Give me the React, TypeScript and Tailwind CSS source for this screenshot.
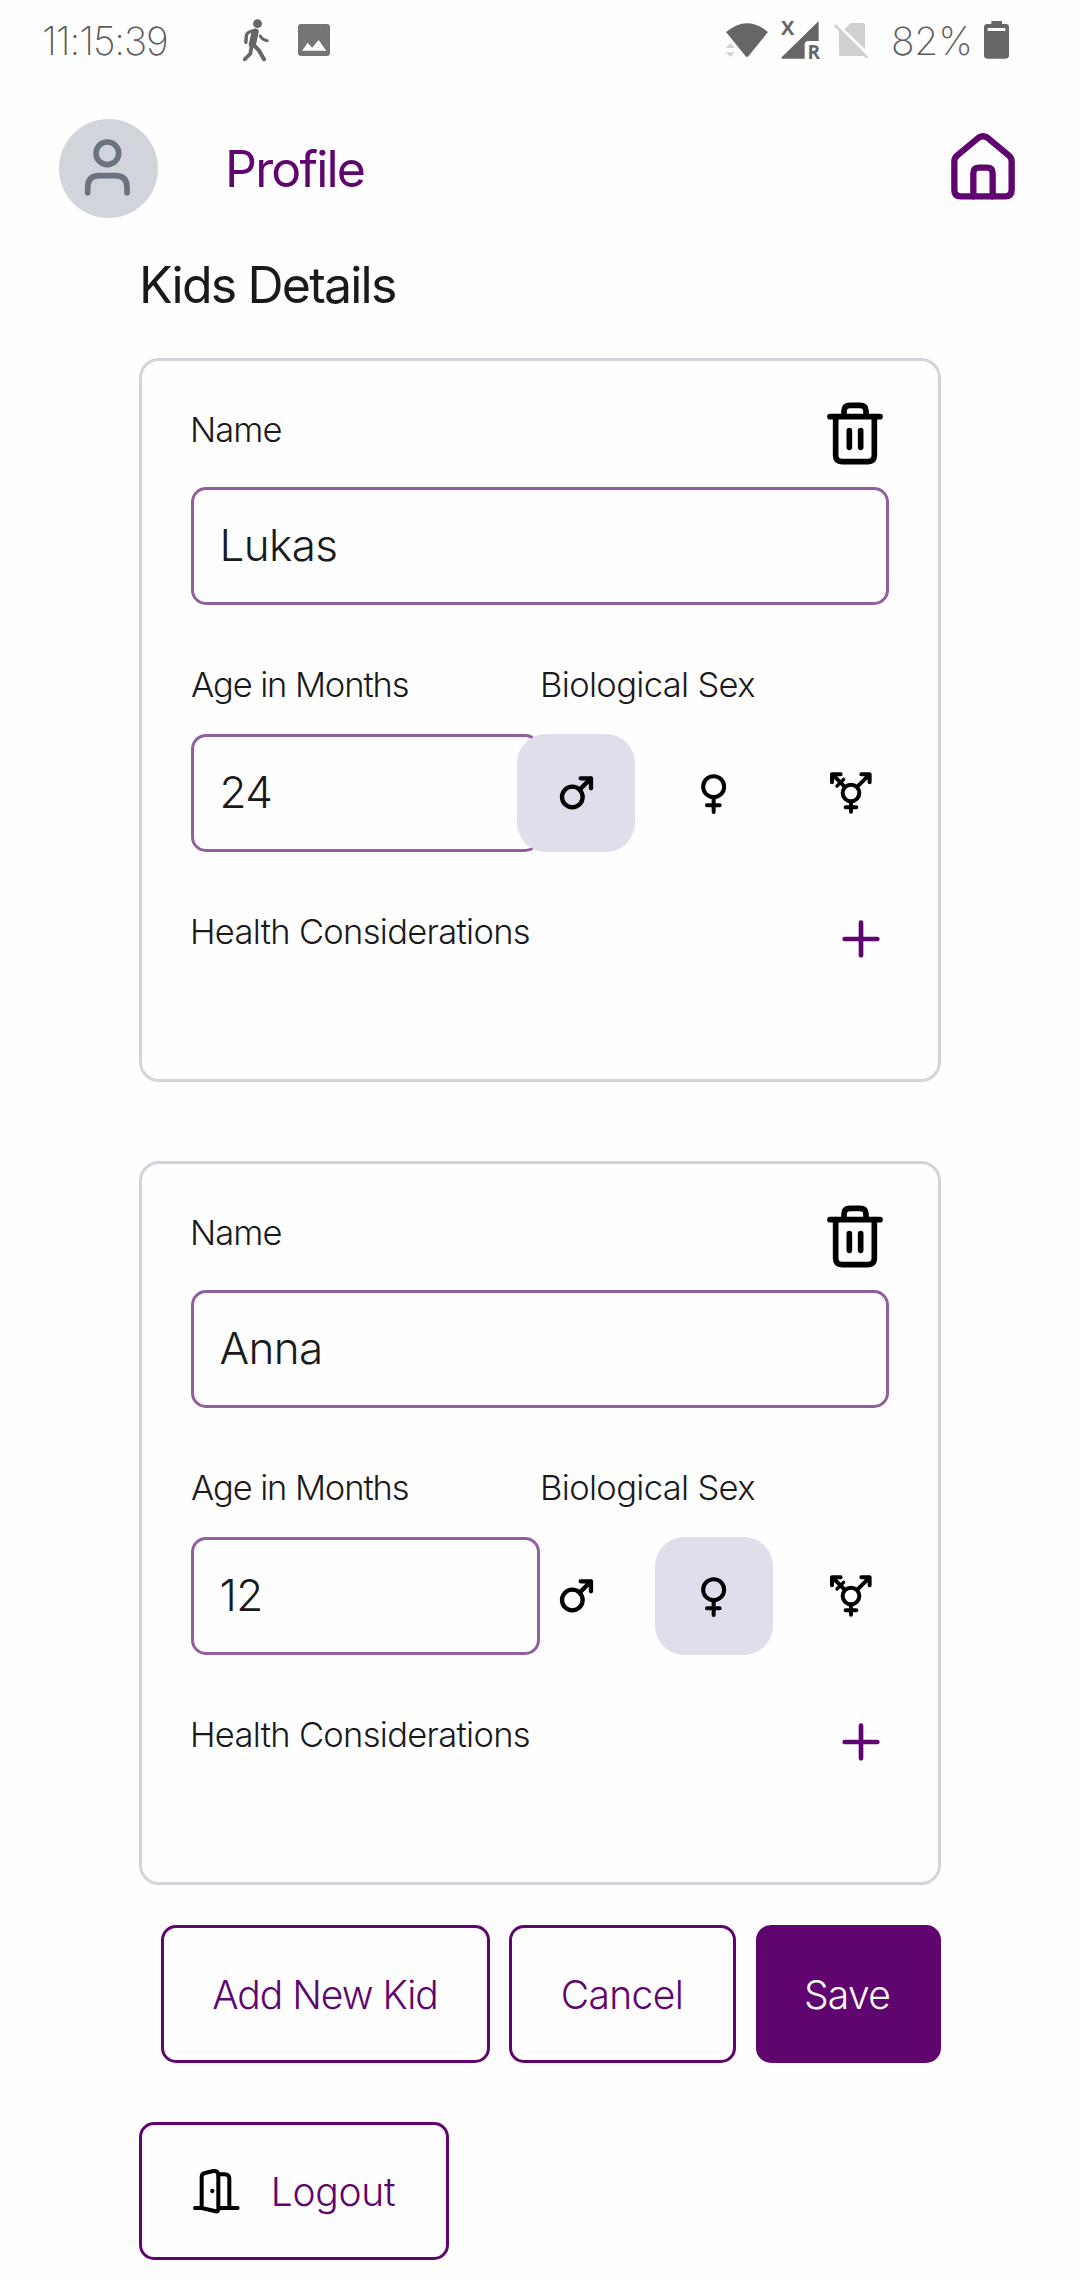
import React from "react";

type Sex = "male" | "female" | "other";

function WalkIcon() {
  return (
    <svg viewBox="700 50 90 140" preserveAspectRatio="none" className="h-[46.7px] w-[31px] shrink-0" fill="none" stroke="#666666" strokeLinecap="round" strokeLinejoin="round">
      <circle cx="748" cy="70" r="13" fill="#666666" stroke="none" />
      <path d="M732 92 Q718 96 716 104 L714 126" strokeWidth="10" />
      <path d="M741 95 L733 132" strokeWidth="21" />
      <path d="M756 107 Q760 117 776 121" strokeWidth="9" />
      <path d="M735 132 L752 150 L767 177" strokeWidth="12" />
      <path d="M730 142 L727 160 L711 177" strokeWidth="11" />
    </svg>
  );
}

function PictureIcon() {
  return (
    <svg viewBox="865 72 93 96" preserveAspectRatio="none" className="h-8 w-8">
      <rect x="865" y="72" width="93" height="96" rx="9" fill="#757575" />
      <path d="M877 152 L893 128 L906 143 L925 120 L947 152 Z" fill="#fff" />
    </svg>
  );
}

function WifiIcon() {
  return (
    <svg viewBox="195 60 132 120" className="h-10 w-11">
      <path d="M198 96 Q261 43 324 96 L265 169 Q261 173 257 169 Z" fill="#666666" />
      <path d="M198 144 L211 130 L224 144 Z M198 157 H224 L211 171 Z" fill="#d0d0d0" />
    </svg>
  );
}

function SignalIcon() {
  return (
    <span className="relative block h-10 w-10">
      <svg viewBox="360 60 120 120" className="h-10 w-10">
        <path d="M474 65 Q476 63 476 67 V123 H445 Q434 123 434 134 V176 H366 Q362 176 365 172 Z" fill="#666666" />
      </svg>
      <span className="absolute top-0 left-px font-['Open_Sans'] text-[20px] leading-[15px] font-bold text-[#666666]">X</span>
      <span className="absolute right-0 bottom-0 font-['Open_Sans'] text-[19px] leading-[16px] font-bold text-[#666666]">R</span>
    </span>
  );
}

function NoSimIcon() {
  return (
    <svg viewBox="519 66 111 117" className="h-[39px] w-[37px]">
      <path d="M553 91 L569 75 Q572 72 576 72 H609 Q615 72 615 78 V151 Z" fill="#d0d0d0" />
      <path d="M537 94 L614 171 H543 Q537 171 537 165 Z" fill="#d0d0d0" />
      <path d="M524 78 L622 176" stroke="#d0d0d0" strokeWidth="8" />
    </svg>
  );
}

function BatteryIcon() {
  return (
    <svg viewBox="972 60 75 120" className="h-10 w-[25px]">
      <path d="M994 63 H1026 V72 H1037 Q1047 72 1047 82 V166 Q1047 176 1037 176 H982 Q972 176 972 166 V82 Q972 72 982 72 H994 Z" fill="#666666" />
      <rect x="983" y="84" width="53" height="9" fill="#fff" />
    </svg>
  );
}

function UserIcon() {
  return (
    <svg viewBox="87 357 297 297" className="h-full w-full" fill="none" stroke="#6b7280" strokeWidth="17" strokeLinecap="round">
      <circle cx="232" cy="460" r="34" />
      <path d="M173 578 V562 Q173 527 208 527 H256 Q291 527 291 562 V578" />
    </svg>
  );
}

function HomeIcon() {
  return (
    <svg viewBox="864 390 210 220" className="h-[73.3px] w-[70px]" fill="none" stroke="#60056f" strokeWidth="19" strokeLinecap="round" strokeLinejoin="round">
      <path d="M883 484 Q883 474 891 467 L956 413 Q969 404 982 413 L1047 467 Q1055 474 1055 484 V570 Q1055 589 1036 589 H902 Q883 589 883 570 Z" />
      <path d="M940 589 V520 Q940 503 957 503 H981 Q998 503 998 520 V589" />
    </svg>
  );
}

function TrashIcon() {
  return (
    <svg viewBox="672 180 186 200" className="h-[66.7px] w-[62px]" fill="none" stroke="#000" strokeWidth="17" strokeLinecap="round" strokeLinejoin="round">
      <path d="M690 230 H840" />
      <path d="M707 230 V346 Q707 365 726 365 H804 Q823 365 823 346 V230" />
      <path d="M732 228 V214 Q732 196 750 196 H780 Q798 196 798 214 V228" />
      <path d="M748 272 V322 M782 272 V322" />
    </svg>
  );
}

const SEX_ICONS: Record<Sex, React.ReactNode> = {
  male: (
    <svg viewBox="150 378 160 160" className="size-[53.3px]" fill="none" stroke="#000" strokeWidth="13" strokeLinecap="round" strokeLinejoin="round">
      <circle cx="217" cy="471" r="31" />
      <path d="M239 449 L273 415 M242 415 H273 V445" />
    </svg>
  ),
  female: (
    <svg viewBox="564 378 160 160" className="size-[53.3px]" fill="none" stroke="#000" strokeWidth="12" strokeLinecap="round" strokeLinejoin="round">
      <circle cx="644" cy="440" r="31.5" />
      <path d="M644 471 V516 M624 496 H662" />
    </svg>
  ),
  other: (
    <svg viewBox="978 378 160 160" className="size-[53.3px]" fill="none" stroke="#000" strokeWidth="12" strokeLinecap="round" strokeLinejoin="round">
      <circle cx="1056" cy="459" r="25" />
      <path d="M1056 485 V515 M1040 502 H1072" />
      <path d="M1075 440 L1112 403 M1087 403 H1112 V427" />
      <path d="M1037 440 L1000 403 M999 427 V403 H1025" />
      <path d="M1014 438 L1034 418" strokeWidth="10" />
    </svg>
  ),
};

function PlusIcon() {
  return (
    <svg viewBox="1021 837 120 120" className="size-10" fill="none" stroke="#60056f" strokeWidth="14" strokeLinecap="round">
      <path d="M1081 848 V946 M1032 897 H1130" />
    </svg>
  );
}

function DoorIcon() {
  return (
    <svg viewBox="180 793 160 160" className="size-[53.3px]" fill="none" stroke="#000" strokeWidth="12" strokeLinecap="round" strokeLinejoin="round">
      <path d="M195 925 H215 M267 925 H323" />
      <path d="M215 925 V832 Q215 822 225 820 L250 814 Q265 812 265 828 V929 Q265 937 257 935 Z" />
      <path d="M267 824 H284 Q298 824 298 838 V925" />
      <circle cx="247" cy="874" r="6.5" fill="#000" stroke="none" />
    </svg>
  );
}

function Field({ value }: { value: string }) {
  return (
    <div className="flex h-[118px] items-center rounded-[15px] border-3 border-[#915f9e] pb-[3px] pl-[25.5px] text-[44px] leading-none tracking-[-0.6px]">
      {value}
    </div>
  );
}

function KidCard({ name, age, sex }: { name: string; age: string; sex: Sex }) {
  const options: Sex[] = ["male", "female", "other"];
  return (
    <section className="h-[724px] rounded-[20px] border-3 border-[#d1d5db] px-[49px]">
      <div className="flex h-[126px] items-start justify-between pr-[3px]">
        <span className="mt-[49px] -ml-px text-[34.5px] leading-10 tracking-[-0.9px]">Name</span>
        <button className="mt-[39px]"><TrashIcon /></button>
      </div>
      <Field value={name} />
      <div className="grid grid-cols-2">
        <span className="mt-[60px] mb-[29px] text-[34.5px] leading-10 tracking-[-1.1px]">Age in Months</span>
        <span className="mt-[60px] mb-[29px] text-[34.5px] leading-10 tracking-[-0.65px]">Biological Sex</span>
        <Field value={age} />
        <div className="relative -ml-[23px] flex gap-[19.5px]">
          {options.map((o) => (
            <button
              key={o}
              className={
                o === sex
                  ? "flex h-[118px] w-[118.3px] shrink-0 items-center justify-center rounded-[29px] bg-[#e1deec]"
                  : "flex h-[118px] w-[118.3px] shrink-0 items-center justify-center rounded-[29px]"
              }
            >
              {SEX_ICONS[o]}
            </button>
          ))}
        </div>
      </div>
      <div className="flex items-start justify-between pr-[8.5px]">
        <span className="mt-[60px] -ml-px text-[34.5px] leading-10 tracking-[-0.7px]">Health Considerations</span>
        <button className="mt-[67px]"><PlusIcon /></button>
      </div>
    </section>
  );
}

export default function App() {
  return (
    <div className="h-[2280px] w-[1080px] overflow-hidden bg-[#fefefe] font-['Inter',sans-serif] font-light text-[#1a1a1c]">
      <div className="flex h-20 items-center text-[39px] leading-none font-extralight text-[#5c5c5c]">
        <span className="ml-[42px] w-[199px] tracking-[-1.1px]">11:15:39</span>
        <WalkIcon />
        <span className="ml-[26px]"><PictureIcon /></span>
        <div className="mr-[71px] ml-auto flex items-center">
          <WifiIcon />
          <span className="ml-[11px]"><SignalIcon /></span>
          <span className="ml-[13px]"><NoSimIcon /></span>
          <span className="ml-[21px] w-[81px] tracking-[-0.2px] whitespace-nowrap">82%</span>
          <span className="ml-[12px]"><BatteryIcon /></span>
        </div>
      </div>

      <header className="flex h-[177px] items-center pr-[62px] pl-[59px]">
        <div className="size-[99px] shrink-0 overflow-hidden rounded-full bg-[#d1d5db]"><UserIcon /></div>
        <h1 className="ml-[67px] text-[50px] leading-none font-normal tracking-[-1.8px] text-[#60056f]">Profile</h1>
        <button className="mb-[3px] ml-auto"><HomeIcon /></button>
      </header>

      <main className="px-[139px]">
        <h2 className="h-[101px] text-[50px] leading-14 font-normal tracking-[-1.8px]">Kids Details</h2>
        <KidCard name="Lukas" age="24" sex="male" />
        <div className="h-[79px]" />
        <KidCard name="Anna" age="12" sex="female" />

        <div className="mt-10 flex justify-end text-[39px] leading-none text-[#60056f]">
          <button className="h-[138px] w-[329px] rounded-[15px] border-3 border-[#60056f] pr-px tracking-[-1px]">Add New Kid</button>
          <button className="ml-[19px] h-[138px] w-[227px] rounded-[15px] border-3 border-[#60056f] pr-px tracking-[-0.6px]">Cancel</button>
          <button className="ml-5 h-[138px] w-[185px] rounded-[15px] bg-[#60056f] pr-[3px] tracking-[-0.7px] text-white">Save</button>
        </div>

        <button className="mt-[59px] flex h-[138px] w-[310px] items-center rounded-[15px] border-3 border-[#60056f] pl-[48px] text-[39px] leading-none tracking-[-0.3px] text-[#60056f]">
          <DoorIcon />
          <span className="ml-[27.5px]">Logout</span>
        </button>
      </main>
    </div>
  );
}
